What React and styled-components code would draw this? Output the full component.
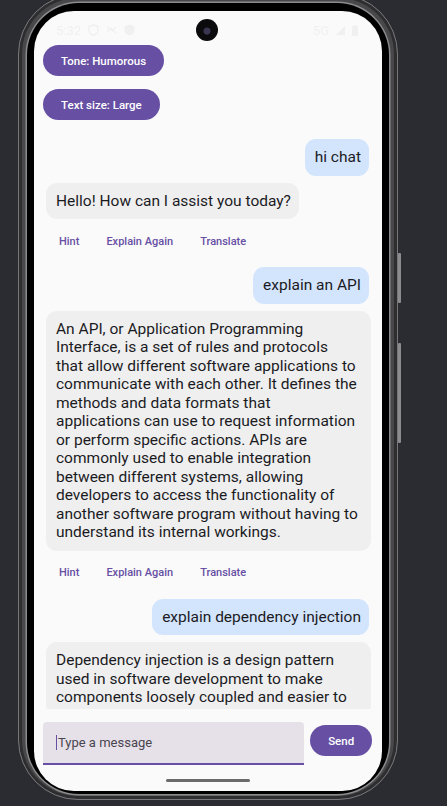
import styled, { createGlobalStyle } from "styled-components";

const GlobalStyle = createGlobalStyle`
    html, body {
        margin: 0;
        padding: 0;
        background: #2b2c31;
        overflow: hidden;
        font-family: Roboto, "Noto Sans", sans-serif;
    }
    * { box-sizing: border-box; }
`;

const Device = styled.div`
    position: relative;
    margin: -6px 0 0 18px;
    width: 380px;
    height: 806px;
    padding: 8px 8px 5px;
    border-radius: 60px;
    background: #48484b;
    border: 1px solid #77777a;
    box-shadow: inset 0 0 0 3px #2e2e30;
`;

const SideKey = styled.span`
    position: absolute;
    right: -4px;
    top: ${({top}) => top}px;
    width: 3px;
    height: ${({h}) => h}px;
    border-radius: 1px;
    background: #8c8c8f;
`;

const Bezel = styled.div`
    height: 100%;
    padding: 8px 7px 5px;
    border-radius: 52px;
    background: #000;
    box-shadow: 0 0 0 1.5px #8b8b8e;
`;

const Screen = styled.div`
    position: relative;
    display: flex;
    flex-direction: column;
    height: 780px;
    border-radius: 40px;
    background: #fafafa;
    overflow: hidden;
`;

const StatusBar = styled.div`
    flex-shrink: 0;
    display: flex;
    align-items: center;
    justify-content: space-between;
    height: 34px;
    padding: 4px 24px 0 22px;
    color: #f1f1f1;
    font-size: 13px;
`;

const StatusGroup = styled.div`
    display: flex;
    align-items: center;
    gap: 7px;
    width: 110px;
    justify-content: ${({end}) => end ? 'flex-end' : 'flex-start'};
`;

const Camera = styled.div`
    width: 22px;
    height: 22px;
    border-radius: 50%;
    background: radial-gradient(circle at 50% 55%, #3a3550 0 3px, #0b0b0e 4px);
`;

const ChatList = styled.div`
    flex: 1;
    min-height: 0;
    overflow: hidden;
    display: flex;
    flex-direction: column;
    padding: 0 13px 0 9px;
`;

const Pill = styled.button`
    flex-shrink: 0;
    align-self: flex-start;
    height: 31px;
    padding: 0 18px;
    margin-bottom: 13px;
    border: none;
    border-radius: 16px;
    background: #6750a4;
    color: #fff;
    font-family: Roboto, sans-serif;
    font-size: 11.5px;
    font-weight: 500;
`;

const Bubble = styled.div`
    flex-shrink: 0;
    align-self: ${({mine}) => mine ? 'flex-end' : 'flex-start'};
    width: ${({wide}) => wide ? '325px' : 'auto'};
    max-width: 325px;
    margin: ${({mine}) => mine ? '6px 0 7px 0' : '0 0 0 3px'};
    padding: 9px 8px 9px 10px;
    border-radius: 11px;
    background: ${({mine}) => mine ? '#d3e5fd' : '#efefef'};
    color: #1b1b1f;
    font-size: 15.5px;
    line-height: 18.5px;
    white-space: nowrap;
`;

const ActionRow = styled.div`
    flex-shrink: 0;
    display: flex;
    align-items: center;
    gap: 27px;
    height: 42px;
    padding: 2px 0 0 16px;
`;

const ActionButton = styled.button`
    padding: 0;
    border: none;
    background: none;
    color: #6750a4;
    font-family: Roboto, sans-serif;
    font-size: 11px;
    font-weight: 500;
`;

const Composer = styled.div`
    flex-shrink: 0;
    display: flex;
    align-items: flex-start;
    gap: 6px;
    padding: 13px 10px 0 9px;
`;

const Field = styled.div`
    display: flex;
    align-items: center;
    width: 263px;
    height: 43px;
    padding: 0 13px;
    border-radius: 4px 4px 0 0;
    background: #e6e0e9;
    border-bottom: 2px solid #6750a4;
    color: #49454f;
    font-size: 13px;
`;

const Caret = styled.span`
    width: 1px;
    height: 15px;
    margin-right: 1px;
    background: #6750a4;
`;

const SendButton = styled.button`
    margin-top: 3px;
    width: 62px;
    height: 31px;
    border: none;
    border-radius: 16px;
    background: #6750a4;
    color: #fff;
    font-family: Roboto, sans-serif;
    font-size: 11.5px;
    font-weight: 500;
`;

const HomeArea = styled.div`
    flex-shrink: 0;
    display: flex;
    justify-content: center;
    padding: 14px 0 9px;
`;

const HomeBar = styled.span`
    width: 84px;
    height: 3px;
    border-radius: 2px;
    background: #6b6b6b;
`;

// lines kept as they wrap on the device
const messages = [
    { mine: true, lines: ["hi chat"] },
    { mine: false, lines: ["Hello! How can I assist you today?"] },
    { mine: true, lines: ["explain an API"] },
    { mine: false, lines: [
        "An API, or Application Programming",
        "Interface, is a set of rules and protocols",
        "that allow different software applications to",
        "communicate with each other. It defines the",
        "methods and data formats that",
        "applications can use to request information",
        "or perform specific actions. APIs are",
        "commonly used to enable integration",
        "between different systems, allowing",
        "developers to access the functionality of",
        "another software program without having to",
        "understand its internal workings.",
    ] },
    { mine: true, lines: ["explain dependency injection"] },
    { mine: false, last: true, lines: [
        "Dependency injection is a design pattern",
        "used in software development to make",
        "components loosely coupled and easier to",
    ] },
];

function App() {
    return (
        <>
            <GlobalStyle />
            <Device>
                <SideKey top={258} h={50} />
                <SideKey top={348} h={100} />
                <Bezel>
                    <Screen>
                        <StatusBar>
                            <StatusGroup>
                                <span>5:32</span>
                                <svg width="11" height="12" viewBox="0 0 11 12" fill="none" stroke="#f0f0f0" strokeWidth="1.5"><path d="M5.5 1 L10 2.6 V6 C10 8.6 8 10.4 5.5 11 C3 10.4 1 8.6 1 6 V2.6 Z"/></svg>
                                <svg width="11" height="8" viewBox="0 0 11 8" fill="none" stroke="#f0f0f0" strokeWidth="1.2"><path d="M1 6 L5 2 L7 4 L10 1 M1 1 L10 7"/></svg>
                                <svg width="11" height="12" viewBox="0 0 11 12" fill="#f0f0f0"><path d="M5.5 0.5 L10.5 2.4 V6 C10.5 8.8 8.4 10.8 5.5 11.5 C2.6 10.8 0.5 8.8 0.5 6 V2.4 Z"/></svg>
                            </StatusGroup>
                            <Camera />
                            <StatusGroup end>
                                <span>5G</span>
                                <svg width="9" height="9" viewBox="0 0 9 9" fill="#f0f0f0"><path d="M9 0 V9 H0 Z"/></svg>
                                <svg width="6" height="11" viewBox="0 0 6 11" fill="#f0f0f0"><rect x="0" y="1" width="6" height="10" rx="1"/><rect x="1.5" y="0" width="3" height="1.5"/></svg>
                            </StatusGroup>
                        </StatusBar>
                        <ChatList>
                            <Pill>Tone: Humorous</Pill>
                            <Pill>Text size: Large</Pill>
                            {messages.map((m, i) => [
                                <Bubble key={'b' + i} mine={m.mine} wide={m.lines.length > 1}>
                                    {m.lines.map((line, j) => (
                                        <div key={j}>{line}</div>
                                    ))}
                                </Bubble>,
                                !m.mine && !m.last && (
                                    <ActionRow key={'a' + i}>
                                        <ActionButton>Hint</ActionButton>
                                        <ActionButton>Explain Again</ActionButton>
                                        <ActionButton>Translate</ActionButton>
                                    </ActionRow>
                                ),
                            ])}
                        </ChatList>
                        <Composer>
                            <Field>
                                <Caret />
                                <span>Type a message</span>
                            </Field>
                            <SendButton>Send</SendButton>
                        </Composer>
                        <HomeArea>
                            <HomeBar />
                        </HomeArea>
                    </Screen>
                </Bezel>
            </Device>
        </>
    );
}

export default App;
